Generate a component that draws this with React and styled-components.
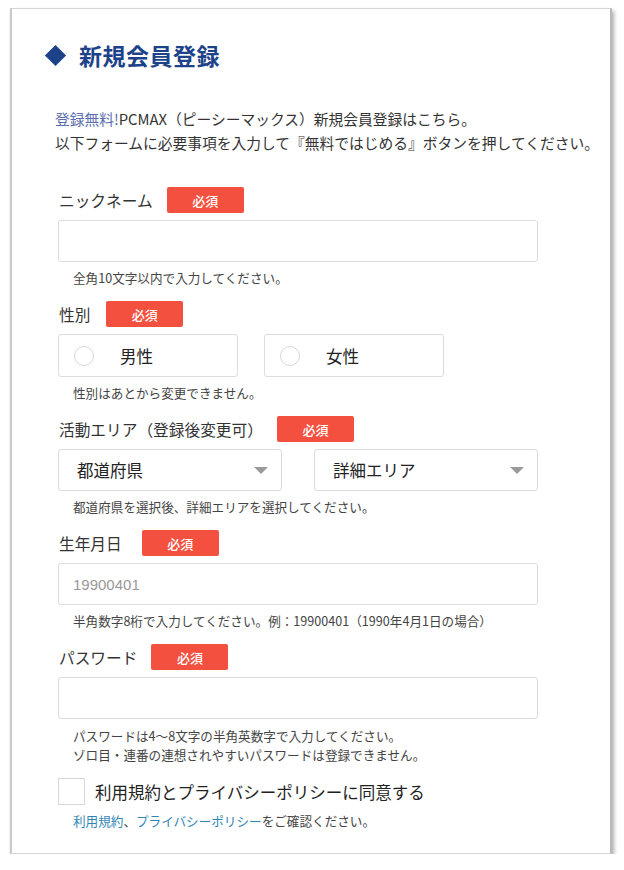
import React from 'react';
import styled, { createGlobalStyle } from 'styled-components';

const GlobalStyle = createGlobalStyle`
  html, body {
    margin: 0;
    padding: 0;
    background: #fff;
  }
  body {
    font-family: 'Noto Sans CJK JP', 'Noto Sans', sans-serif;
    color: #333;
    -webkit-font-smoothing: antialiased;
  }
`;

const Page = styled.div`
  padding: 8px 0 0 10px;
`;

const Card = styled.section`
  box-sizing: border-box;
  width: 602px;
  height: 846px;
  padding: 30px 0 0 34px;
  background: #fff;
  border: 1px solid #d6d6d6;
  border-left: 2px solid #c9c9c9;
  border-right: 2px solid #b8b8b8;
  box-shadow: 2px 3px 4px rgba(0, 0, 0, 0.32);
`;

const Title = styled.h1`
  display: flex;
  align-items: center;
  gap: 16px;
  margin: 0;
  height: 32px;
  font-size: 23px;
  font-weight: 700;
  color: #1d4289;
  letter-spacing: 0.5px;

  &::before {
    content: '';
    width: 15px;
    height: 15px;
    margin-left: 2px;
    background: #1d4289;
    transform: rotate(45deg);
  }
`;

const Intro = styled.p`
  margin: 36px 0 0 9px;
  font-size: 14.75px;
  line-height: 24px;
  color: #333;
  white-space: nowrap;

  em {
    font-style: normal;
    color: #5a6db0;
  }
`;

const Form = styled.div`
  width: 480px;
  margin: 32px 0 0 12px;
`;

const Field = styled.div`
  margin-bottom: 14px;
`;

const LabelRow = styled.div`
  display: flex;
  align-items: center;
  gap: ${({ $gap }) => $gap || 14}px;
  height: 26px;
  margin-bottom: 7px;
`;

const Label = styled.span`
  font-size: 15.7px;
  color: #333;
  padding-left: 1px;
`;

const Badge = styled.span`
  display: inline-flex;
  align-items: center;
  justify-content: center;
  width: 77px;
  height: 26px;
  border-radius: 2px;
  background: #f4503f;
  color: #fff;
  font-size: 13px;
  font-weight: 500;
`;

const TextInput = styled.div`
  box-sizing: border-box;
  height: 42px;
  border: 1px solid #dcdcdc;
  border-radius: 3px;
  background: #fff;
  display: flex;
  align-items: center;
  padding-left: 14px;
  font-family: 'Liberation Sans', Arial, sans-serif;
  font-size: 15px;
  color: #999;
`;

const Hint = styled.p`
  margin: 7px 0 0 15px;
  font-size: 12.6px;
  line-height: ${({ $lh }) => $lh || 18}px;
  color: #444;
  white-space: nowrap;

  a {
    color: #2f86b5;
    text-decoration: none;
  }
`;

const Pair = styled.div`
  display: flex;
  gap: ${({ $gap }) => $gap}px;
`;

const RadioBox = styled.label`
  box-sizing: border-box;
  display: flex;
  align-items: center;
  width: 180px;
  height: 43px;
  padding-left: 15px;
  border: 1px solid #dcdcdc;
  border-radius: 3px;
  font-size: 16.5px;
  color: #222;

  &::before {
    content: '';
    box-sizing: border-box;
    width: 20px;
    height: 20px;
    margin-right: 26px;
    border: 1px solid #d8d8d8;
    border-radius: 50%;
  }
`;

const Select = styled.div`
  box-sizing: border-box;
  display: flex;
  align-items: center;
  justify-content: space-between;
  width: 224px;
  height: 42px;
  padding: 0 13px 0 18px;
  border: 1px solid #dcdcdc;
  border-radius: 3px;
  font-size: 16.5px;
  color: #222;

  &::after {
    content: '';
    width: 0;
    height: 0;
    border-left: 7px solid transparent;
    border-right: 7px solid transparent;
    border-top: 7px solid #9a9a9a;
  }
`;

const AgreeRow = styled.label`
  display: flex;
  align-items: center;
  gap: 10px;
  font-size: 16.5px;
  color: #222;
`;

const CheckBox = styled.span`
  box-sizing: border-box;
  width: 27px;
  height: 27px;
  border: 1px solid #d8d8d8;
  background: #fff;
`;

const fields = [
  { label: 'ニックネーム', control: 'input', hint: ['全角10文字以内で入力してください。'] },
  { label: '性別', control: 'radio', gap: 16, hint: ['性別はあとから変更できません。'] },
  { label: '活動エリア（登録後変更可）', control: 'select', hint: ['都道府県を選択後、詳細エリアを選択してください。'] },
  { label: '生年月日', control: 'input', placeholder: '19900401', gap: 20, hint: ['半角数字8桁で入力してください。例：19900401（1990年4月1日の場合）'] },
  {
    label: 'パスワード',
    control: 'input',
    hint: ['パスワードは4〜8文字の半角英数字で入力してください。', 'ゾロ目・連番の連想されやすいパスワードは登録できません。'],
  },
];

const Control = ({ field }) => {
  if (field.control === 'radio') {
    return (
      <Pair $gap={26}>
        <RadioBox>男性</RadioBox>
        <RadioBox>女性</RadioBox>
      </Pair>
    );
  }
  if (field.control === 'select') {
    return (
      <Pair $gap={32}>
        <Select>都道府県</Select>
        <Select>詳細エリア</Select>
      </Pair>
    );
  }
  return <TextInput>{field.placeholder}</TextInput>;
};

const App = () => {
  return (
    <Page>
      <GlobalStyle />
      <Card>
        <Title>新規会員登録</Title>
        <Intro>
          <em>登録無料!</em>PCMAX（ピーシーマックス）新規会員登録はこちら。
          <br />
          以下フォームに必要事項を入力して『無料ではじめる』ボタンを押してください。
        </Intro>

        <Form>
          {fields.map((f) => (
            <Field key={f.label}>
              <LabelRow $gap={f.gap}>
                <Label>{f.label}</Label>
                <Badge>必須</Badge>
              </LabelRow>
              <Control field={f} />
              <Hint $lh={f.hint.length > 1 ? 19 : 18}>
                {f.hint.map((line, j) => (
                  <React.Fragment key={j}>
                    {j > 0 && <br />}
                    {line}
                  </React.Fragment>
                ))}
              </Hint>
            </Field>
          ))}

          <AgreeRow>
            <CheckBox />
            利用規約とプライバシーポリシーに同意する
          </AgreeRow>
          <Hint>
            <a href="#terms">利用規約</a>、<a href="#privacy">プライバシーポリシー</a>をご確認ください。
          </Hint>
        </Form>
      </Card>
    </Page>
  );
};

export default App;
